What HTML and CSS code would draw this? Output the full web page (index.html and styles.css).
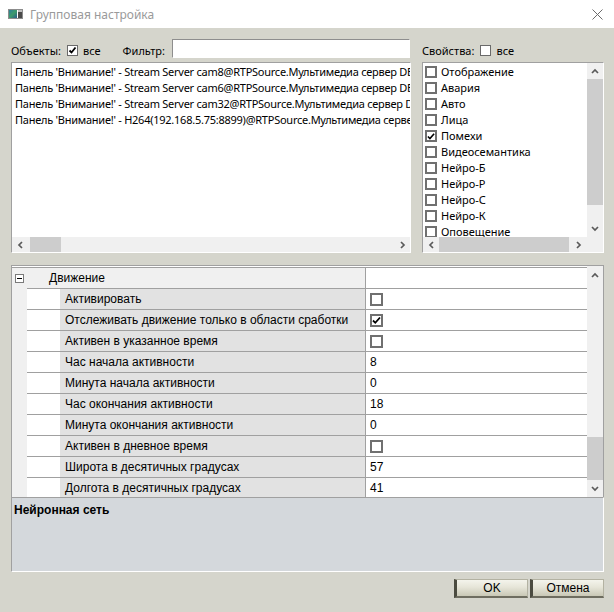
FILE: index.html
```html
<!DOCTYPE html>
<html lang="ru">
<head>
    <meta charset="UTF-8">
    <title>Групповая настройка</title>
    <link rel="stylesheet" href="styles.css">
</head>
<body>
    <div class="titlebar">
        <svg class="app-icon" width="15" height="10" viewBox="0 0 15 10">
            <defs>
                <linearGradient id="pic" x1="0" y1="0" x2="1" y2="1">
                    <stop offset="0" stop-color="#2f7f9a"/>
                    <stop offset="0.5" stop-color="#3d9a6a"/>
                    <stop offset="1" stop-color="#2a5d8c"/>
                </linearGradient>
            </defs>
            <rect x="0.5" y="0.5" width="14" height="9" fill="#fff" stroke="#8c8c8c"/>
            <rect x="1" y="1" width="8" height="8" fill="url(#pic)"/>
            <rect x="10" y="1" width="4" height="2" fill="#bdbdbd"/>
            <rect x="10" y="3" width="4" height="6" fill="#4a4a4a"/>
        </svg>
        <span class="title">Групповая настройка</span>
        <svg class="close" width="11" height="11" viewBox="0 0 11 11">
            <path d="M0.5 0.5L10.5 10.5M10.5 0.5L0.5 10.5" stroke="#6b6b6b" stroke-width="1"/>
        </svg>
    </div>

    <div class="dialog">
        <div class="top">
            <!-- объекты -->
            <div class="objects">
                <div class="head">
                    <span class="head-label">Объекты:</span>
                    <span class="box small checked">
                        <svg width="9" height="9" viewBox="0 0 9 9"><path d="M1.5 4.5L3.5 6.5L7.5 1.5" stroke="#000" stroke-width="1.8" fill="none"/></svg>
                    </span>
                    <span class="head-all">все</span>
                    <span class="head-label filter-label">Фильтр:</span>
                    <input class="filter" type="text">
                </div>
                <div class="list">
                    <div class="list-main">
                        <div class="list-body">
                            <div class="item">Панель 'Внимание!' - Stream Server cam8@RTPSource.Мультимедиа сервер DESKTOP</div>
                            <div class="item">Панель 'Внимание!' - Stream Server cam6@RTPSource.Мультимедиа сервер DESKTOP</div>
                            <div class="item">Панель 'Внимание!' - Stream Server cam32@RTPSource.Мультимедиа сервер DESKTOP</div>
                            <div class="item">Панель 'Внимание!' - H264(192.168.5.75:8899)@RTPSource.Мультимедиа сервер DESKTOP</div>
                        </div>
                    </div>
                    <div class="hscroll">
                        <span class="arrow"><svg width="7" height="8" viewBox="0 0 7 8"><path d="M5 1L2 4L5 7" stroke="#5a5a5a" stroke-width="1.7" fill="none"/></svg></span>
                        <span class="hthumb left-thumb"></span>
                        <span class="spacer"></span>
                        <span class="arrow"><svg width="7" height="8" viewBox="0 0 7 8"><path d="M2 1L5 4L2 7" stroke="#5a5a5a" stroke-width="1.7" fill="none"/></svg></span>
                    </div>
                </div>
            </div>

            <!-- свойства -->
            <div class="props">
                <div class="head">
                    <span class="head-label">Свойства:</span>
                    <span class="box small"></span>
                    <span class="head-all">все</span>
                </div>
                <div class="list">
                    <div class="list-main">
                        <div class="list-body checks">
                            <div class="item"><span class="box"></span>Отображение</div>
                            <div class="item"><span class="box"></span>Авария</div>
                            <div class="item"><span class="box"></span>Авто</div>
                            <div class="item"><span class="box"></span>Лица</div>
                            <div class="item"><span class="box checked"><svg width="9" height="9" viewBox="0 0 9 9"><path d="M1 4.5L3.3 6.8L8 1.5" stroke="#000" stroke-width="1.8" fill="none"/></svg></span>Помехи</div>
                            <div class="item"><span class="box"></span>Видеосемантика</div>
                            <div class="item"><span class="box"></span>Нейро-Б</div>
                            <div class="item"><span class="box"></span>Нейро-Р</div>
                            <div class="item"><span class="box"></span>Нейро-С</div>
                            <div class="item"><span class="box"></span>Нейро-К</div>
                            <div class="item"><span class="box"></span>Оповещение</div>
                        </div>
                        <div class="vscroll">
                            <span class="arrow"><svg width="8" height="6" viewBox="0 0 8 6"><path d="M1 5L4 2L7 5" stroke="#5a5a5a" stroke-width="1.7" fill="none"/></svg></span>
                            <span class="vthumb props-thumb"></span>
                            <span class="spacer"></span>
                            <span class="arrow"><svg width="8" height="6" viewBox="0 0 8 6"><path d="M1 1L4 4L7 1" stroke="#5a5a5a" stroke-width="1.7" fill="none"/></svg></span>
                        </div>
                    </div>
                    <div class="hscroll">
                        <span class="arrow"><svg width="7" height="8" viewBox="0 0 7 8"><path d="M5 1L2 4L5 7" stroke="#5a5a5a" stroke-width="1.7" fill="none"/></svg></span>
                        <span class="hthumb props-hthumb"></span>
                        <span class="spacer"></span>
                        <span class="arrow"><svg width="7" height="8" viewBox="0 0 7 8"><path d="M2 1L5 4L2 7" stroke="#5a5a5a" stroke-width="1.7" fill="none"/></svg></span>
                        <span class="corner"></span>
                    </div>
                </div>
            </div>
        </div>

        <!-- таблица свойств -->
        <div class="grid">
            <div class="rows">
                <div class="row category">
                    <div class="gutter"><span class="minus"></span></div>
                    <div class="cat-name">Движение</div>
                    <div class="value"></div>
                </div>
                <div class="row">
                    <div class="gutter"></div><div class="indent"></div>
                    <div class="name">Активировать</div>
                    <div class="value"><span class="box"></span></div>
                </div>
                <div class="row">
                    <div class="gutter"></div><div class="indent"></div>
                    <div class="name">Отслеживать движение только в области сработки</div>
                    <div class="value"><span class="box checked"><svg width="9" height="9" viewBox="0 0 9 9"><path d="M1 4.5L3.3 6.8L8 1.5" stroke="#000" stroke-width="1.8" fill="none"/></svg></span></div>
                </div>
                <div class="row">
                    <div class="gutter"></div><div class="indent"></div>
                    <div class="name">Активен в указанное время</div>
                    <div class="value"><span class="box"></span></div>
                </div>
                <div class="row">
                    <div class="gutter"></div><div class="indent"></div>
                    <div class="name">Час начала активности</div>
                    <div class="value">8</div>
                </div>
                <div class="row">
                    <div class="gutter"></div><div class="indent"></div>
                    <div class="name">Минута начала активности</div>
                    <div class="value">0</div>
                </div>
                <div class="row">
                    <div class="gutter"></div><div class="indent"></div>
                    <div class="name">Час окончания активности</div>
                    <div class="value">18</div>
                </div>
                <div class="row">
                    <div class="gutter"></div><div class="indent"></div>
                    <div class="name">Минута окончания активности</div>
                    <div class="value">0</div>
                </div>
                <div class="row">
                    <div class="gutter"></div><div class="indent"></div>
                    <div class="name">Активен в дневное время</div>
                    <div class="value"><span class="box"></span></div>
                </div>
                <div class="row">
                    <div class="gutter"></div><div class="indent"></div>
                    <div class="name">Широта в десятичных градусах</div>
                    <div class="value">57</div>
                </div>
                <div class="row">
                    <div class="gutter"></div><div class="indent"></div>
                    <div class="name">Долгота в десятичных градусах</div>
                    <div class="value">41</div>
                </div>
            </div>
            <div class="vscroll grid-scroll">
                <span class="arrow"><svg width="8" height="6" viewBox="0 0 8 6"><path d="M1 5L4 2L7 5" stroke="#5a5a5a" stroke-width="1.7" fill="none"/></svg></span>
                <span class="spacer"></span>
                <span class="vthumb grid-thumb"></span>
                <span class="arrow"><svg width="8" height="6" viewBox="0 0 8 6"><path d="M1 1L4 4L7 1" stroke="#5a5a5a" stroke-width="1.7" fill="none"/></svg></span>
            </div>
        </div>

        <div class="desc">Нейронная сеть</div>

        <div class="buttons">
            <button class="btn">OK</button>
            <button class="btn">Отмена</button>
        </div>
    </div>
</body>
</html>
```

FILE: styles.css
```css
* {
    margin: 0;
    padding: 0;
    box-sizing: border-box;
}

body {
    width: 614px;
    height: 612px;
    overflow: hidden;
    background-color: #d5d5cc;
    font-family: "Liberation Sans", Arial, sans-serif;
    font-size: 12px;
    color: #000;
}

/* заголовок окна */
.titlebar {
    height: 28px;
    background: #fff;
    display: flex;
    align-items: center;
    padding: 0 11px 0 8px;
}

.app-icon {
    margin-right: 7px;
}

.title {
    flex: 1;
    font-family: "Noto Sans", sans-serif;
    font-size: 12px;
    color: #9a9a9a;
}

.dialog {
    padding: 11px 10px 0 11px;
}

.top {
    display: flex;
    gap: 11px;
}

.objects {
    width: 400px;
}

.props {
    width: 182px;
}

.head {
    height: 19px;
    margin-bottom: 4px;
    display: flex;
    align-items: center;
    font-family: "Noto Sans", sans-serif;
    font-size: 11px;
}

.head-label,
.head-all {
    padding-top: 4px;
}

.head .box {
    margin: 4px 5px 0 6px;
}

.filter-label {
    margin-left: 22px;
}

.filter {
    margin-left: 7px;
    width: 238px;
    height: 19px;
    border: 1px solid;
    border-color: #8e8e8e #fff #fff #8e8e8e;
    outline: none;
    background: #fff;
}

/* чекбоксы */
.box {
    display: inline-flex;
    align-items: center;
    justify-content: center;
    width: 12px;
    height: 12px;
    border: 2px solid #707070;
    background: #fff;
    flex-shrink: 0;
}

.box.small {
    width: 11px;
    height: 11px;
    border-width: 1px;
    border-color: #6a6a6a;
}

/* списки */
.list {
    height: 191px;
    background: #fff;
    border: 1px solid;
    border-color: #a0a0a0 #fff #fff #a0a0a0;
    display: flex;
    flex-direction: column;
}

.list-main {
    flex: 1;
    display: flex;
    overflow: hidden;
}

.list-body {
    flex: 1;
    overflow: hidden;
    padding: 1px 0 0 3px;
    font-family: "Noto Sans", sans-serif;
    font-size: 11px;
    letter-spacing: -0.25px;
}

.item {
    height: 16px;
    line-height: 16px;
    white-space: nowrap;
}

.checks {
    padding-left: 2px;
    letter-spacing: 0;
}

.checks .item {
    display: flex;
    align-items: center;
    line-height: 14px;
}

.checks .box {
    margin-right: 4px;
}

/* полосы прокрутки */
.hscroll {
    height: 15px;
    background: #f0f0f0;
    display: flex;
    align-items: center;
    flex-shrink: 0;
}

.vscroll {
    width: 16px;
    background: #f0f0f0;
    display: flex;
    flex-direction: column;
    align-items: center;
    flex-shrink: 0;
}

.arrow {
    width: 16px;
    height: 16px;
    display: flex;
    align-items: center;
    justify-content: center;
    flex-shrink: 0;
}

.spacer {
    flex: 1;
}

.hthumb {
    height: 15px;
    background: #cdcdcd;
}

.vthumb {
    width: 16px;
    background: #cdcdcd;
}

.left-thumb {
    width: 31px;
    margin-left: 2px;
}

.props-hthumb {
    width: 130px;
}

.props-thumb {
    height: 126px;
}

.corner {
    width: 17px;
    height: 15px;
    background: #f0f0f0;
}

/* таблица свойств */
.grid {
    margin-top: 12px;
    height: 232px;
    background: #fff;
    border: 1px solid #a0a0a0;
    border-bottom: none;
    display: flex;
}

.rows {
    flex: 1;
    overflow: hidden;
    margin-top: 1px;
    border-top: 1px solid #a0a0a0;
}

.row {
    height: 21px;
    display: grid;
    grid-template-columns: 15px 33px 306px 1fr;
    line-height: 20px;
}

.gutter {
    background: #f0f0f0;
    display: flex;
    align-items: center;
    justify-content: center;
    padding-right: 1px;
}

.indent,
.name,
.value,
.cat-name {
    border-bottom: 1px solid #a0a0a0;
}

.name {
    background: #e2e2e2;
    border-right: 1px solid #a0a0a0;
    padding-left: 5px;
    white-space: nowrap;
}

.cat-name {
    grid-column: 2 / 4;
    background: #f0f0f0;
    border-right: 1px solid #a0a0a0;
    padding-left: 22px;
}

.value {
    padding-left: 4px;
    display: flex;
    align-items: center;
}

.value .box {
    width: 13px;
    height: 13px;
}

.minus {
    width: 9px;
    height: 9px;
    border: 1px solid #7a7a7a;
    background: #fff;
    position: relative;
}

.minus::after {
    content: "";
    position: absolute;
    left: 1px;
    top: 3px;
    width: 5px;
    height: 1px;
    background: #000;
}

.grid-scroll .arrow {
    height: 17px;
}

.grid-thumb {
    height: 43px;
}

/* описание */
.desc {
    height: 75px;
    background: #d4d8dc;
    border: 1px solid;
    border-color: #a0a0a0 #fff #fff #a0a0a0;
    padding: 5px 2px;
    font-weight: bold;
    font-size: 12px;
}

/* кнопки */
.buttons {
    margin-top: 7px;
    display: flex;
    justify-content: flex-end;
    gap: 2px;
}

.btn {
    width: 74px;
    height: 19px;
    font-family: "Liberation Sans", Arial, sans-serif;
    font-size: 12px;
    color: #000;
    background: linear-gradient(#f4f4ec, #e6e5d8 45%, #c9c8b6);
    border: 1px solid #b3b2a2;
    border-left: 3px solid #4b4b40;
    border-bottom: 2px solid #6e6d60;
    cursor: pointer;
}
```
